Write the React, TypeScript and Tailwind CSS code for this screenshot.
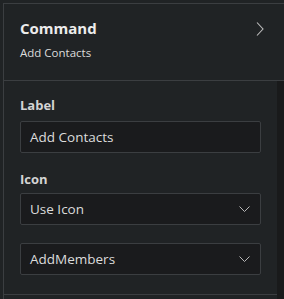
import React from 'react';

function ChevronDown() {
  return (
    <svg width="11" height="6" viewBox="0 0 11 6" fill="none" className="text-[#b8b8b8]">
      <path d="M0.5 0.5L5.5 5.5L10.5 0.5" stroke="currentColor" strokeWidth="1" />
    </svg>
  );
}

function SelectBox({ value }: { value: string }) {
  return (
    <div className="flex h-[32px] items-center justify-between rounded-[2px] border border-[#3b3e41] bg-[#1a1b1d] pl-[9px] pr-[10px] text-[13.5px] text-[#dcdcdc]">
      <span>{value}</span>
      <ChevronDown />
    </div>
  );
}

export default function App() {
  return (
    <div
      className="h-[299px] w-[284px] overflow-hidden bg-[#202325] pl-[3px] pt-[3px]"
      style={{ fontFamily: '"Open Sans", "Noto Sans", sans-serif' }}
    >
      <div className="flex h-[296px] flex-col border-l border-t border-[#3b3e41]">
        {/* Header */}
        <div className="flex h-[77px] items-start justify-between border-b border-[#3b3e41] pl-[16px] pr-[20px] pt-[12px]">
          <div className="flex flex-col">
            <span className="text-[15px] font-bold leading-[24px] text-[#ececec]">Command</span>
            <span className="mt-[5px] text-[11.5px] leading-[16px] text-[#dcdcdc]">Add Contacts</span>
          </div>
          <svg width="8" height="14" viewBox="0 0 8 14" fill="none" className="mt-[6px] text-[#bdbdbd]">
            <path d="M1 0.5L7 7L1 13.5" stroke="currentColor" strokeWidth="1.1" />
          </svg>
        </div>

        {/* Body */}
        <div className="flex flex-1">
          <div className="flex flex-1 flex-col">
            <div className="flex flex-col px-[16px] pt-[14px]">
              <span className="text-[13px] font-bold leading-[20px] text-[#d4d4d4]">Label</span>
              <div className="mt-[6px] flex h-[32px] items-center rounded-[2px] border border-[#3b3e41] bg-[#1a1b1d] pl-[9px] text-[13.5px] text-[#dcdcdc]">
                Add Contacts
              </div>
              <span className="mt-[16px] text-[13px] font-bold leading-[20px] text-[#d4d4d4]">Icon</span>
              <div className="mt-[4px]">
                <SelectBox value="Use Icon" />
              </div>
              <div className="mt-[18px]">
                <SelectBox value="AddMembers" />
              </div>
            </div>
            <div className="mt-auto h-[5px] border-t border-[#3b3e41]" />
          </div>
          <div className="w-[7px] bg-[#191a1b]" />
        </div>
      </div>
    </div>
  );
}
